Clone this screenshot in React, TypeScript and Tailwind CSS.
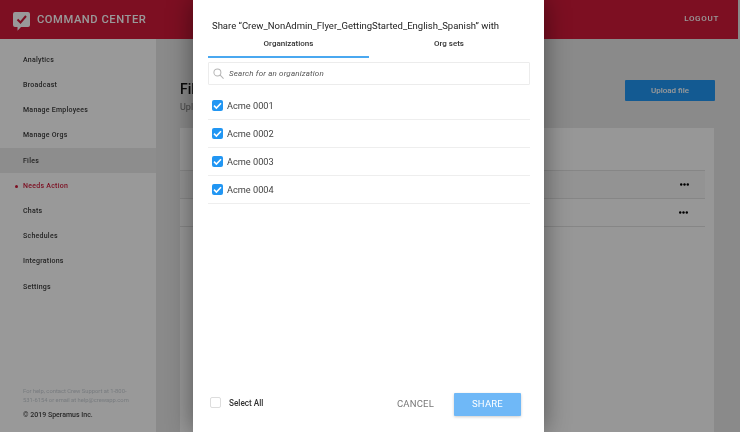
const font = { fontFamily: "Roboto, 'Liberation Sans', sans-serif" };

const navItems = ["Analytics", "Broadcast", "Manage Employees", "Manage Orgs", "Files", "Needs Action", "Chats", "Schedules", "Integrations", "Settings"];
const orgs = ["Acme 0001", "Acme 0002", "Acme 0003", "Acme 0004"];

function Dots() {
  return (
    <svg viewBox="0 0 9 3" className="h-[3px] w-[9px]" fill="#000">
      <circle cx="1.2" cy="1.5" r="1.2" />
      <circle cx="4.5" cy="1.5" r="1.2" />
      <circle cx="7.8" cy="1.5" r="1.2" />
    </svg>
  );
}

function Check() {
  return (
    <span className="flex size-[11px] items-center justify-center rounded-[2px] bg-[#2196f3]">
      <svg viewBox="0 0 11 11" className="size-[11px]" fill="none" stroke="white" strokeWidth="1.6">
        <path d="M2 5.6 L4.4 8 L9 3.2" />
      </svg>
    </span>
  );
}

export default function App() {
  return (
    <div className="relative flex h-[432px] w-[740px] overflow-hidden bg-[#e6e6e6] blur-[0.3px]" style={font}>
      <div className="w-[738px] shrink-0">
        <header className="flex h-[39px] items-center justify-between bg-[#d01a3a] pl-[13px] pr-[19px]">
          <div className="flex items-center gap-[7px]">
            <svg viewBox="0 0 17 19" className="mt-[4px] h-[19px] w-[17px]">
              <path d="M2 0 H15 A2 2 0 0 1 17 2 V13 A2 2 0 0 1 15 15 H8 L4.5 18.7 V15 H2 A2 2 0 0 1 0 13 V2 A2 2 0 0 1 2 0 Z" fill="#ffffff" />
              <path d="M4.5 7.5 L7.5 10.5 L13 4" fill="none" stroke="#d01a3a" strokeWidth="2" />
            </svg>
            <span className="mt-[2px] text-[11.2px] font-medium tracking-[0.55px] text-white">COMMAND CENTER</span>
          </div>
          <span className="mb-[2px] text-[8px] font-medium tracking-[0.7px] text-white">LOGOUT</span>
        </header>

        <div className="flex h-[393px]">
          <aside className="flex w-[156px] shrink-0 flex-col bg-white pt-[8.5px] pb-[12px]">
            <nav className="flex flex-col">
              {navItems.map((item) => {
                const alert = item === "Needs Action";
                return (
                  <div
                    key={item}
                    className={`relative flex h-[25.2px] items-center pl-[23px] text-[7px] font-medium tracking-[0.25px] ${
                      item === "Files" ? "bg-[#ececec]" : ""
                    } ${alert ? "text-[#d01a3a]" : "text-[#3a3a3a]"}`}
                  >
                    {alert && <span className="absolute left-[15px] size-[3px] rounded-full bg-[#d01a3a]" />}
                    {item}
                  </div>
                );
              })}
            </nav>
            <div className="mt-auto pl-[23px]">
              <p className="w-[112px] text-[5.8px] leading-[9px] text-[#c8ced4]">
                For help, contact Crew Support at 1-800-531-6154 or email at help@crewapp.com
              </p>
              <p className="mt-[5px] text-[7px] font-medium text-[#444]">© 2019 Speramus Inc.</p>
            </div>
          </aside>

          <main className="flex-1 pl-[24px] pr-[23px] pt-[41px]">
            <div className="flex items-start justify-between">
              <div>
                <h1 className="text-[14px] leading-[18px] font-medium text-[#111]">Files</h1>
                <p className="mt-[3px] text-[9px] text-[#777]">Upload files</p>
              </div>
              <button className="h-[21px] w-[90px] rounded-[1px] bg-[#2196f3] text-[8px] font-medium text-white">Upload file</button>
            </div>
            <section className="mr-[1px] mt-[13px] h-[304px] bg-[#fcfcfc] pr-[9px] pt-[42px]">
              <div className="flex h-[29px] items-center justify-end border-y border-[#e0e0e0] bg-[#f5f5f5] pr-[16px]">
                <Dots />
              </div>
              <div className="flex h-[28px] items-center justify-end border-b border-[#e0e0e0] pr-[17px]">
                <Dots />
              </div>
            </section>
          </main>
        </div>
      </div>

      <div className="absolute inset-0 bg-black/40" />

      <div className="absolute left-[193px] top-0 flex h-[432px] w-[351px] flex-col bg-white shadow-[0_0_24px_rgba(0,0,0,0.45)]">
        <h2 className="pl-[19px] pt-[19px] text-[9.5px] leading-[14px] text-[#222]">
          Share “Crew_NonAdmin_Flyer_GettingStarted_English_Spanish” with
        </h2>
        <div className="mt-[4px] flex px-[15px]">
          <div className="h-[21px] w-[161px] border-b-2 border-[#4aa8f0] text-center text-[8px] font-medium leading-[14px] text-[#333]">
            Organizations
          </div>
          <div className="h-[21px] flex-1 text-center text-[8px] font-medium leading-[14px] text-[#333]">Org sets</div>
        </div>
        <div className="mx-[15px] mt-[4px] flex h-[23px] w-[322px] items-center gap-[5px] rounded-[1px] border border-[#ececec] pl-[4px]">
          <svg viewBox="0 0 12 12" className="size-[11px]" fill="none" stroke="#b5b5b5" strokeWidth="1.1">
            <circle cx="4.8" cy="4.8" r="3.8" />
            <path d="M7.6 7.6 L11.5 11.5" />
          </svg>
          <span className="text-[8px] italic tracking-[0.15px] text-[#555]">Search for an organization</span>
        </div>
        <ul className="mx-[15px] mt-[7px] flex w-[322px] flex-col">
          {orgs.map((o) => (
            <li key={o} className="flex h-[28px] items-center gap-[4px] border-b border-[#eeeeee] pl-[4px] text-[9.2px] text-[#444]">
              <Check />
              {o}
            </li>
          ))}
        </ul>
        <div className="mt-auto flex items-center pb-[16px] pl-[17px] pr-[23px]">
          <div className="mb-[3px] flex items-center">
            <span className="mb-[1px] size-[11px] rounded-[2px] border border-[#dddddd]" />
            <span className="ml-[8px] text-[8.2px] font-medium text-[#333]">Select All</span>
          </div>
          <span className="ml-auto text-[9.5px] tracking-[0.2px] text-[#777]">CANCEL</span>
          <button className="ml-[20px] h-[23px] w-[67px] rounded-[1px] bg-[#6fb8f7] text-[9.5px] tracking-[0.2px] text-white shadow-[0_1px_3px_rgba(0,0,0,0.2)]">SHARE</button>
        </div>
      </div>
    </div>
  );
}
